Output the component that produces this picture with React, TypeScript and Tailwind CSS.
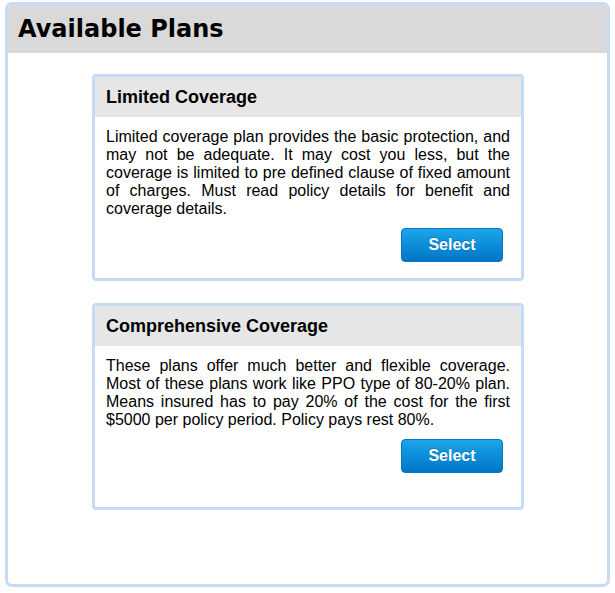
import React from "react";

const plans = [
  {
    title: "Limited Coverage",
    text: "Limited coverage plan provides the basic protection, and may not be adequate. It may cost you less, but the coverage is limited to pre defined clause of fixed amount of charges. Must read policy details for benefit and coverage details.",
  },
  {
    title: "Comprehensive Coverage",
    text: "These plans offer much better and flexible coverage. Most of these plans work like PPO type of 80-20% plan. Means insured has to pay 20% of the cost for the first $5000 per policy period. Policy pays rest 80%.",
  },
];

export default function App() {
  return (
    <div className="w-[615px] h-[593px] bg-white pl-[5px] pt-[2px]" style={{ fontFamily: '"Liberation Sans", Arial, sans-serif' }}>
      <div className="w-[605px] h-[585px] border-[3px] border-[#c6dcf6] rounded-[7px] overflow-hidden flex flex-col">
        <div className="h-[48px] bg-[#d9d9d9] flex items-center pl-[10px]">
          <h1 className="text-[24px] font-bold text-black leading-none" style={{ fontFamily: '"DejaVu Sans", Verdana, sans-serif' }}>
            Available Plans
          </h1>
        </div>
        <div className="flex flex-col items-start pt-[21px] gap-[22px] pl-[84px]">
          {plans.map((p) => (
            <div key={p.title} className="w-[432px] h-[207px] border-[3px] border-[#c6dcf6] rounded-[4px] flex flex-col overflow-hidden">
              <div className="h-[40px] bg-[#e6e6e6] flex items-center pl-[11px]">
                <h2 className="text-[18px] font-bold text-black leading-none">{p.title}</h2>
              </div>
              <div className="px-[11px] pt-[11px]">
                <p className="text-[16px] leading-[18px] text-black text-justify">{p.text}</p>
                <div className="flex justify-end pr-[7px] mt-[10px]">
                  <button className="w-[102px] h-[34px] rounded-[4px] bg-gradient-to-b from-[#1ba6e9] to-[#0175c8] border border-[#0a76c2] text-white text-[16px] font-bold" style={{ textShadow: "0 -1px 0 rgba(0,0,0,0.2)" }}>
                    Select
                  </button>
                </div>
              </div>
            </div>
          ))}
        </div>
      </div>
    </div>
  );
}
